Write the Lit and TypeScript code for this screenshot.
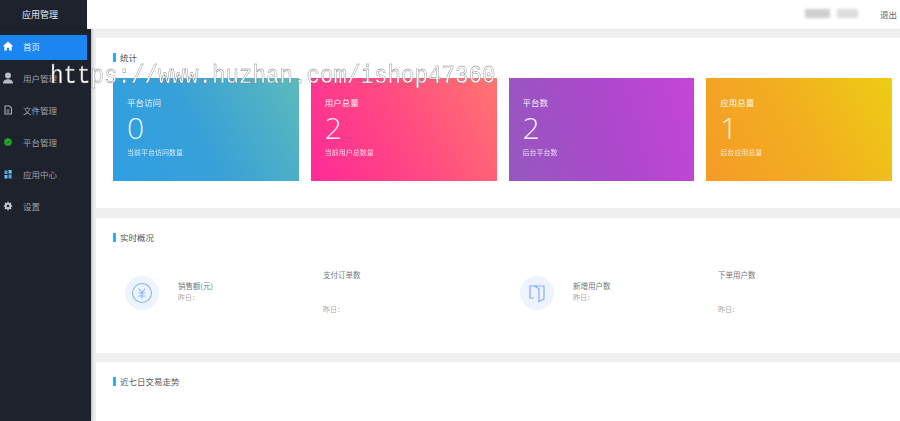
import { LitElement, html, svg, css } from "lit";
import { customElement } from "lit/decorators.js";

const nav = [
  { label: "首页", icon: svg`<path fill="#fff" d="M8 3.500 2.800 8.200h1.500v4.300h2.600V9.700h2.200v2.800h2.600V8.200h1.500z"/>` },
  { label: "用户管理", icon: svg`<circle cx="8" cy="5.500" r="3" fill="#b9bcc0"/><path fill="#b9bcc0" d="M3 13.500c0-3 2-4.300 5-4.300s5 1.300 5 4.300z"/>` },
  { label: "文件管理", icon: svg`<path fill="none" stroke="#a6a9ae" stroke-width="1.100" d="M5 4h4.500l2 2v6h-6.500z"/><path stroke="#a6a9ae" d="M6.500 8h3M6.500 10h3"/>` },
  { label: "平台管理", icon: svg`<circle cx="8" cy="8" r="3.800" fill="#22a82a"/><path fill="none" stroke="#0f5f16" d="M6.300 8.200 7.600 9.500 9.800 6.500"/>` },
  { label: "应用中心", icon: svg`<rect x="4.500" y="4.500" width="3" height="3.500" fill="#4aa3df"/><rect x="8.500" y="4" width="3.200" height="3.500" fill="#6cc0ee"/><rect x="4.500" y="9" width="3" height="3.500" fill="#6cc0ee"/><rect x="8.500" y="8.500" width="3.200" height="4" fill="#4aa3df"/>` },
  { label: "设置", icon: svg`<circle cx="8" cy="8" r="2.300" fill="none" stroke="#c2c4c7" stroke-width="2"/><path stroke="#c2c4c7" stroke-width="1.500" d="M8 3.800v1.400M8 10.800v1.400M3.800 8h1.400M10.800 8h1.400M5 5l1 1M10 10l1 1M5 11l1-1M10 6l1-1"/>` },
];

const cards = [
  { cls: "blue", title: "平台访问", value: "0", sub: "当前平台访问数量" },
  { cls: "pink", title: "用户总量", value: "2", sub: "当前用户总数量" },
  { cls: "purple", title: "平台数", value: "2", sub: "后台平台数" },
  { cls: "orange", title: "应用总量", value: "1", sub: "后台应用总量" },
];

@customElement("app-root")
export class AppRoot extends LitElement {
  static styles = css`
    :host {
      display: block;
      position: relative;
      width: 900px;
      height: 421px;
      overflow: hidden;
      background: #f0f0f0;
      font-family: "Noto Sans CJK SC", "Liberation Sans", sans-serif;
    }
    .top { display: flex; height: 29px; }
    .logo {
      width: 87px;
      background: #1e222d;
      color: #e4e5e7;
      font-size: 9px;
      display: flex;
      align-items: center;
      padding: 0 0 1px 22px;
      box-sizing: border-box;
    }
    .header {
      flex: 1;
      background: #fff;
      display: flex;
      align-items: center;
      justify-content: flex-end;
      padding: 0 3px 2px 0;
      box-sizing: border-box;
      box-shadow: 0 1px 2px rgba(0,0,0,.05);
      position: relative;
    }
    .user { display: flex; align-items: center; gap: 7px; margin-right: 22px; filter: blur(1.500px); }
    .user i { display: block; height: 9px; background: #cfcfcf; }
    .user .a { width: 25px; }
    .user .b { width: 21px; background: #ddd; }
    .logout { font-size: 8.500px; color: #666; }
    .body { display: flex; height: 392px; }
    .side {
      width: 91px;
      flex: none;
      background: #1e222d;
      padding-top: 6px;
      box-sizing: border-box;
      box-shadow: 1px 0 3px rgba(0,0,0,.25);
    }
    .item {
      width: 87px;
      height: 25px;
      margin-bottom: 7px;
      display: flex;
      align-items: center;
      gap: 7px;
      color: #9da0a6;
      font-size: 8.500px;
    }
    .item span { margin-bottom: 3px; }
    .item svg { width: 16px; height: 16px; flex: none; margin-bottom: 3px; }
    .item.on { background: #1b86f2; color: #e9f3ff; }
    .main { flex: 1; padding: 9px 0 0 5px; min-width: 0; }
    .panel { background: #fff; padding: 15px 8px 0 17px; box-sizing: border-box; }
    .p1 { height: 170px; margin-bottom: 10px; }
    .p2 { height: 135px; margin-bottom: 9px; }
    .p3 { height: 59px; }
    .title {
      display: flex;
      align-items: center;
      gap: 4.500px;
      height: 9px;
      font-size: 8.500px;
      line-height: 9px;
      color: #555;
    }
    .title::before { content: ""; width: 2.500px; height: 9px; background: #14b8ff; }
    .cards {
      display: grid;
      grid-template-columns: repeat(4, 1fr);
      gap: 12px;
      margin-top: 16px;
    }
    .card {
      height: 103px;
      padding: 18px 14px 0;
      box-sizing: border-box;
      color: rgba(255,255,255,.92);
      display: flex;
      flex-direction: column;
      align-items: flex-start;
    }
    .blue { background: linear-gradient(62deg, #2f9fe3, #37a0d8 45%, #5cbabc); }
    .pink { background: linear-gradient(62deg, #ff2a98, #ff4a82 50%, #ff7570); }
    .purple { background: linear-gradient(75deg, #9558bf, #ad48cc 55%, #c545d8); }
    .orange { background: linear-gradient(62deg, #f59b28, #f2ae20 50%, #edcd14); }
    .ct { font-size: 8.500px; line-height: 12px; }
    .cv { font-family: "Open Sans", sans-serif; font-weight: 300; font-size: 30px; line-height: 36px; margin-top: 2px; }
    .cs { font-size: 7px; line-height: 10px; margin-top: 1px; opacity: .85; }
    .stats {
      display: grid;
      grid-template-columns: repeat(3, 197.500px) 1fr;
      margin: 20px 0 0 12px;
      height: 62px;
      align-items: center;
    }
    .stat { display: flex; align-items: center; gap: 19px; }
    .stat > div:last-child { margin-bottom: 3px; }
    .circle { width: 34px; height: 34px; border-radius: 50%; background: #edf4fe; display: flex; align-items: center; justify-content: center; flex: none; }
    .circle svg { width: 22px; height: 22px; }
    .lbl { font-size: 7.500px; line-height: 11px; color: #777; }
    .yes { font-size: 7px; line-height: 11px; color: #aaa; }
    .split { display: flex; flex-direction: column; gap: 24px; padding: 0 0 3px 0.500px; }
    .stat > div:last-child .yes { margin-top: 1px; }
    .mark {
      position: absolute;
      left: 50px;
      top: 65px;
      font-family: "Liberation Mono", monospace;
      font-size: 22.500px;
      line-height: 26px;
      color: #fff;
      -webkit-text-stroke: 0.350px #777;
      white-space: nowrap;
      pointer-events: none;
      transform: scaleY(1.150);
      transform-origin: 0 100%;
    }
  `;

  render() {
    return html`
      <div class="top">
        <div class="logo">应用管理</div>
        <div class="header">
          <div class="user"><i class="a"></i><i class="b"></i></div>
          <span class="logout">退出</span>
        </div>
      </div>
      <div class="body">
        <aside class="side">
          ${nav.map((n, i) => html`
            <div class="item ${i === 0 ? "on" : ""}">
              <svg viewBox="0 0 16 16">${n.icon}</svg><span>${n.label}</span>
            </div>`)}
        </aside>
        <main class="main">
          <section class="panel p1">
            <div class="title">统计</div>
            <div class="cards">
              ${cards.map((c) => html`
                <div class="card ${c.cls}">
                  <div class="ct">${c.title}</div>
                  <div class="cv">${c.value}</div>
                  <div class="cs">${c.sub}</div>
                </div>`)}
            </div>
          </section>
          <section class="panel p2">
            <div class="title">实时概况</div>
            <div class="stats">
              <div class="stat">
                <div class="circle">
                  <svg viewBox="0 0 22 22" fill="none" stroke="#8ab4f6" stroke-width="1.100">
                    <circle cx="11" cy="11" r="9.500"/>
                    <path d="M7.800 6.500 11 10.500l3.200-4M7.500 11h7M7.500 14h7M11 10.500v6"/>
                  </svg>
                </div>
                <div><div class="lbl">销售额(元)</div><div class="yes">昨日：</div></div>
              </div>
              <div class="split"><div class="lbl">支付订单数</div><div class="yes">昨日：</div></div>
              <div class="stat">
                <div class="circle">
                  <svg viewBox="0 0 22 22" fill="none" stroke="#7fb0f6" stroke-width="1.200">
                    <path d="M8 4h10v13l-5 2.500V6.500z" />
                    <path d="M8 4H4v12h4"/>
                  </svg>
                </div>
                <div><div class="lbl">新增用户数</div><div class="yes">昨日：</div></div>
              </div>
              <div class="split"><div class="lbl">下单用户数</div><div class="yes">昨日：</div></div>
            </div>
          </section>
          <section class="panel p3">
            <div class="title">近七日交易走势</div>
          </section>
        </main>
      </div>
      <div class="mark">https://www.huzhan.com/ishop47360</div>
    `;
  }
}
